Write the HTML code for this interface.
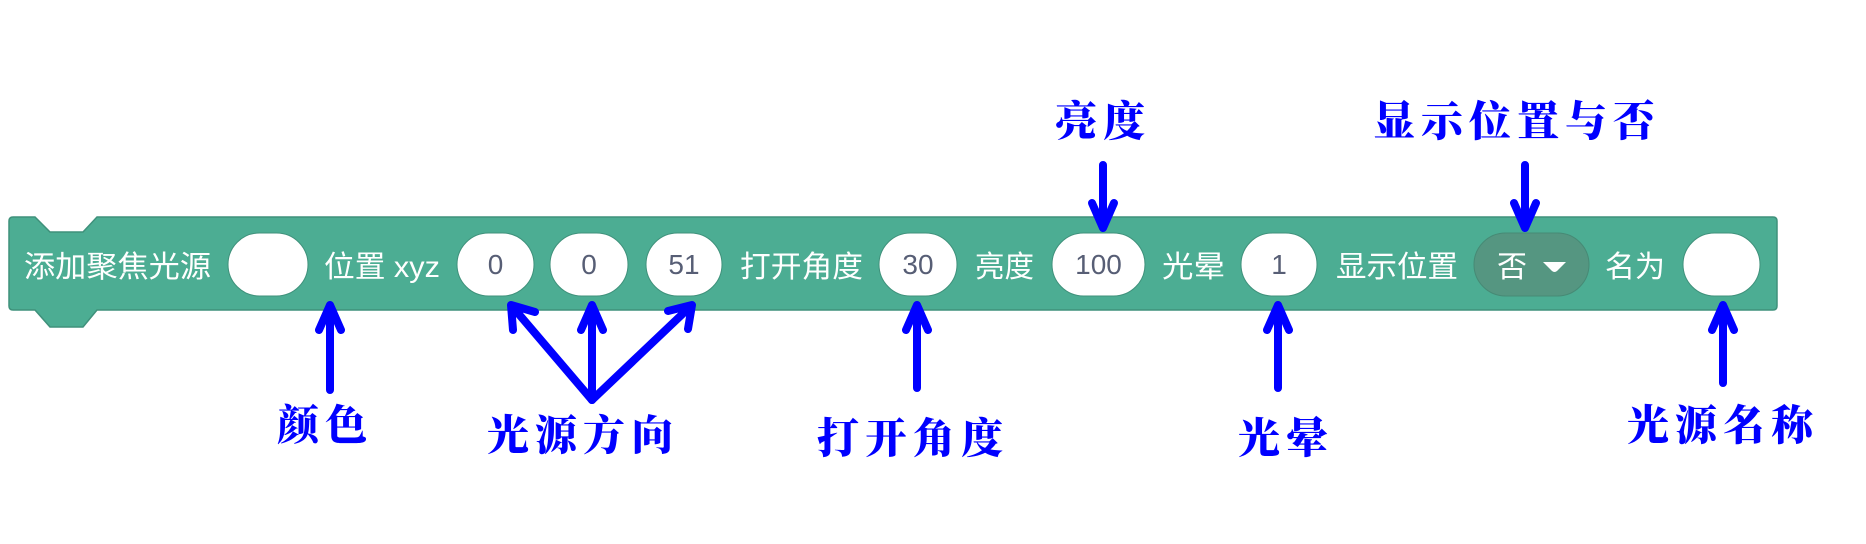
<!DOCTYPE html>
<html><head><meta charset="utf-8"><style>
html,body{margin:0;padding:0;background:#fff;}
svg{display:block}
.l{font-family:"Liberation Sans","Noto Sans CJK SC",sans-serif;font-size:30px;fill:#fff}
.n{font-family:"Liberation Sans",sans-serif;font-size:28px;fill:#575e75;text-anchor:middle}
.a{font-family:"Noto Serif CJK SC","Liberation Serif",serif;font-weight:900;font-size:42px;fill:#0000ff;letter-spacing:6px}
.ar{stroke:#0000ff;stroke-width:8;fill:none;stroke-linecap:round;stroke-linejoin:round}
</style></head><body>
<svg width="1866" height="544" viewBox="0 0 1866 544">
<path d="M13 217 H35 L50 232 H83 L97 217 H1773 Q1777 217 1777 221 V306 Q1777 310 1773 310 H97 L83 327 H50 L35 310 H13 Q9 310 9 306 V221 Q9 217 13 217 Z" fill="#4cad93" stroke="#3f917b" stroke-width="1.5"/>
<text class="l" x="24" y="277" textLength="187" lengthAdjust="spacingAndGlyphs">添加聚焦光源</text>
<rect x="228" y="233" width="80" height="63" rx="31.5" fill="#fff" stroke="#3f917b"/>
<text class="l" x="324" y="277" textLength="116" lengthAdjust="spacingAndGlyphs">位置 xyz</text>
<rect x="457" y="233" width="77" height="63" rx="31.5" fill="#fff" stroke="#3f917b"/>
<text class="n" x="495.5" y="274">0</text>
<rect x="550" y="233" width="78" height="63" rx="31.5" fill="#fff" stroke="#3f917b"/>
<text class="n" x="589" y="274">0</text>
<rect x="646" y="233" width="76" height="63" rx="31.5" fill="#fff" stroke="#3f917b"/>
<text class="n" x="684" y="274">51</text>
<text class="l" x="740" y="277" textLength="123" lengthAdjust="spacingAndGlyphs">打开角度</text>
<rect x="879" y="233" width="78" height="63" rx="31.5" fill="#fff" stroke="#3f917b"/>
<text class="n" x="918" y="274">30</text>
<text class="l" x="975" y="277" textLength="59" lengthAdjust="spacingAndGlyphs">亮度</text>
<rect x="1052" y="233" width="93" height="63" rx="31.5" fill="#fff" stroke="#3f917b"/>
<text class="n" x="1098.5" y="274">100</text>
<text class="l" x="1162" y="277" textLength="63" lengthAdjust="spacingAndGlyphs">光晕</text>
<rect x="1241" y="233" width="76" height="63" rx="31.5" fill="#fff" stroke="#3f917b"/>
<text class="n" x="1279" y="274">1</text>
<text class="l" x="1336" y="277" textLength="122" lengthAdjust="spacingAndGlyphs">显示位置</text>
<rect x="1474" y="233" width="115" height="63" rx="31.5" fill="#559681" stroke="#468a75"/>
<text class="l" x="1497" y="277">否</text>
<path d="M1543 262 H1566 L1557 271 Q1554.5 273 1552 271 Z" fill="#fff"/>
<text class="l" x="1605" y="277" textLength="60" lengthAdjust="spacingAndGlyphs">名为</text>
<rect x="1683" y="233" width="77" height="63" rx="31.5" fill="#fff" stroke="#3f917b"/>

<g class="ar">
<path d="M1103 165 V228 M1092 203 L1103 228 L1114 203"/>
<path d="M1525 165 V228 M1514 203 L1525 228 L1536 203"/>
<path d="M330 390 V305 M319 330 L330 305 L341 330"/>
<path d="M592 400 L511 305 M513 330 L511 305 L535 312"/>
<path d="M592 400 V305 M581 330 L592 305 L603 330"/>
<path d="M592 400 L692 305 M668 311 L692 305 L688 329"/>
<path d="M917 388 V305 M906 330 L917 305 L928 330"/>
<path d="M1278 388 V305 M1267 330 L1278 305 L1289 330"/>
<path d="M1723 383 V305 M1712 330 L1723 305 L1734 330"/>
</g>
<text class="a" x="1055" y="136">亮度</text>
<text class="a" x="1373" y="136">显示位置与否</text>
<text class="a" x="277" y="440">颜色</text>
<text class="a" x="487" y="450">光源方向</text>
<text class="a" x="817" y="453">打开角度</text>
<text class="a" x="1238" y="453">光晕</text>
<text class="a" x="1627" y="440">光源名称</text>
</svg>
</body></html>
